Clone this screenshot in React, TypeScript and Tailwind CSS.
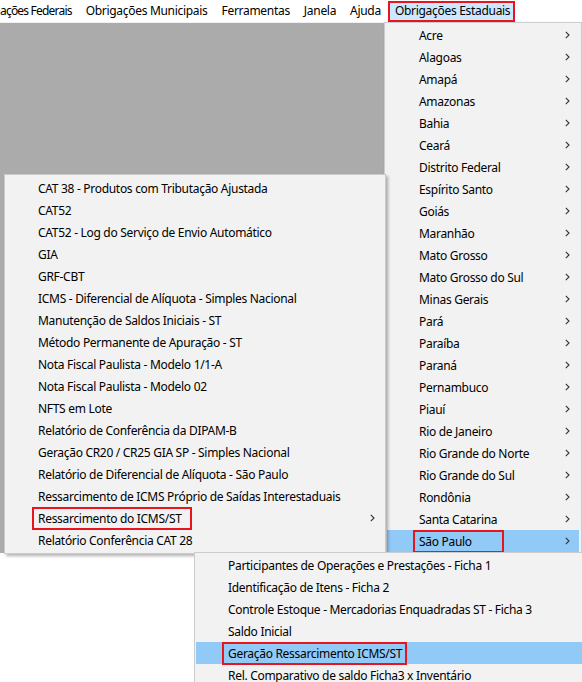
import React from "react";

type Item = { label: string; sub?: boolean; active?: boolean; marked?: number };

const menuBar = ["Obrigações Municipais", "Ferramentas", "Janela", "Ajuda"];

const estados: Item[] = [
  "Acre", "Alagoas", "Amapá", "Amazonas", "Bahia", "Ceará", "Distrito Federal", "Espírito Santo",
  "Goiás", "Maranhão", "Mato Grosso", "Mato Grosso do Sul", "Minas Gerais", "Pará", "Paraíba",
  "Paraná", "Pernambuco", "Piauí", "Rio de Janeiro", "Rio Grande do Norte", "Rio Grande do Sul",
  "Rondônia", "Santa Catarina",
].map((label) => ({ label, sub: true }));
estados.push({ label: "São Paulo", sub: true, active: true, marked: 91 });

const saoPaulo: Item[] = [
  { label: "CAT 38 - Produtos com Tributação Ajustada" },
  { label: "CAT52" },
  { label: "CAT52 - Log do Serviço de Envio Automático" },
  { label: "GIA" },
  { label: "GRF-CBT" },
  { label: "ICMS - Diferencial de Alíquota - Simples Nacional" },
  { label: "Manutenção de Saldos Iniciais - ST" },
  { label: "Método Permanente de Apuração - ST" },
  { label: "Nota Fiscal Paulista - Modelo 1/1-A" },
  { label: "Nota Fiscal Paulista - Modelo 02" },
  { label: "NFTS em Lote" },
  { label: "Relatório de Conferência da DIPAM-B" },
  { label: "Geração CR20 / CR25 GIA SP - Simples Nacional" },
  { label: "Relatório de Diferencial de Alíquota - São Paulo" },
  { label: "Ressarcimento de ICMS Próprio de Saídas Interestaduais" },
  { label: "Ressarcimento do ICMS/ST", sub: true, marked: 160 },
  { label: "Relatório Conferência CAT 28" },
];

const ressarcimento: Item[] = [
  { label: "Participantes de Operações e Prestações - Ficha 1" },
  { label: "Identificação de Itens - Ficha 2" },
  { label: "Controle Estoque - Mercadorias Enquadradas ST - Ficha 3" },
  { label: "Saldo Inicial" },
  { label: "Geração Ressarcimento ICMS/ST", active: true, marked: 185 },
  { label: "Rel. Comparativo de saldo Ficha3 x Inventário" },
];

function Chevron() {
  return (
    <svg width="5" height="8" viewBox="0 0 5 8" className="shrink-0">
      <path d="M0.8 0.8 L4 4 L0.8 7.2" fill="none" stroke="#333" strokeWidth="1.1" />
    </svg>
  );
}

function MenuRow({ item, textLeft, arrowRight }: { item: Item; textLeft: number; arrowRight: number }) {
  return (
    <div
      className={`relative flex h-[22px] items-center justify-between whitespace-nowrap ${
        item.active ? "bg-[#91c9f7]" : ""
      }`}
      style={{ paddingLeft: textLeft, paddingRight: arrowRight }}
    >
      <span className="relative top-[1px]">{item.label}</span>
      {item.sub && <Chevron />}
      {item.marked && (
        <div
          className="pointer-events-none absolute top-0 h-[23px] border-2 border-[#e8151f]"
          style={{ left: textLeft - 6, width: item.marked }}
        />
      )}
    </div>
  );
}

export default function App() {
  return (
    <div className="relative h-[682px] w-[582px] overflow-hidden bg-white font-['Noto_Sans',sans-serif] text-[12px] leading-none tracking-[-0.3px] text-black">
      <div className="flex h-[22px] items-center whitespace-nowrap bg-white">
        <span className="pr-[7px] tracking-[-0.8px]">ações Federais</span>
        {menuBar.map((m) => (
          <span key={m} className="px-[7px]">
            {m}
          </span>
        ))}
        <span className="flex h-[21px] items-center border-2 border-[#e8151f] bg-[#cce8ff] pl-[5px] pr-[3px]">
          Obrigações Estaduais
        </span>
      </div>
      <div className="h-px bg-[#f0f0f0]" />
      <div className="h-[530px] bg-[#ababab]" />

      {/* Obrigações Estaduais dropdown */}
      <div className="absolute left-[384px] top-[22px] w-[198px] border border-[#cccccc] bg-[#f2f2f2] px-[2px] py-[1px] shadow-[2px_2px_3px_rgba(0,0,0,0.25)]">
        {estados.map((e) => (
          <MenuRow key={e.label} item={e} textLeft={32} arrowRight={9} />
        ))}
      </div>

      {/* São Paulo submenu */}
      <div className="absolute left-[4px] top-[174px] w-[382px] border border-[#cccccc] bg-[#f2f2f2] px-[2px] py-[2px] shadow-[2px_2px_3px_rgba(0,0,0,0.3)]">
        {saoPaulo.map((e) => (
          <MenuRow key={e.label} item={e} textLeft={31} arrowRight={8} />
        ))}
      </div>

      {/* Ressarcimento do ICMS/ST submenu */}
      <div className="absolute left-[194px] top-[552px] w-[400px] border border-[#cccccc] bg-[#f2f2f2] px-[1px] py-[1px]">
        {ressarcimento.map((e) => (
          <MenuRow key={e.label} item={e} textLeft={32} arrowRight={9} />
        ))}
      </div>
    </div>
  );
}
